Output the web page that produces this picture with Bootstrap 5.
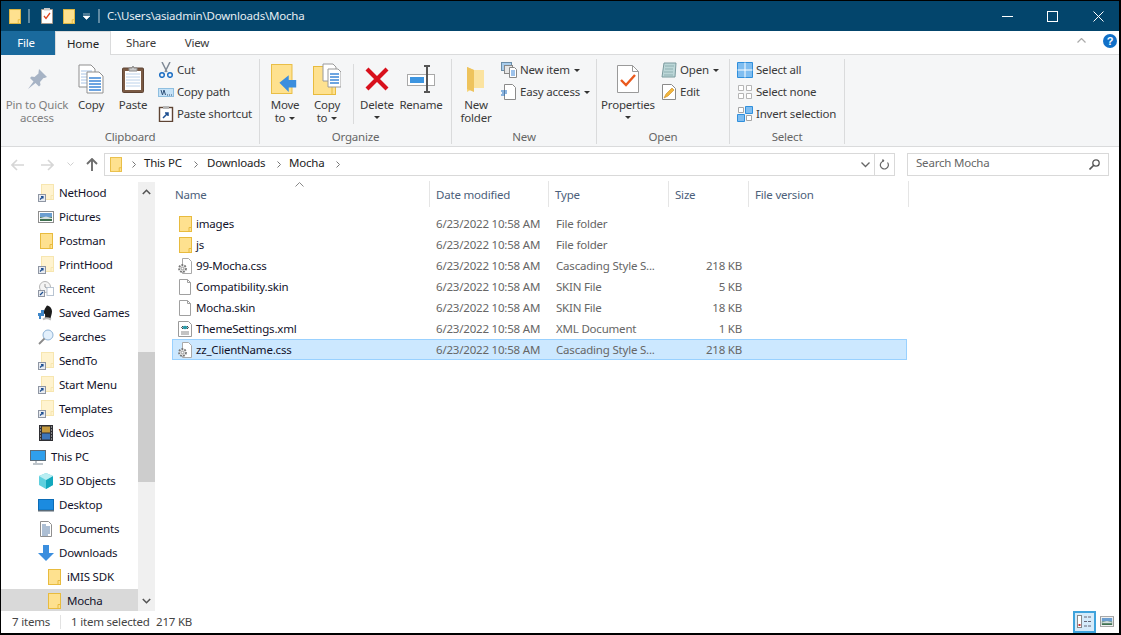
<!DOCTYPE html>
<html lang="en">
<head>
<meta charset="UTF-8">
<title>Mocha</title>
<link href="https://cdn.jsdelivr.net/npm/bootstrap@5.3.2/dist/css/bootstrap.min.css" rel="stylesheet">
<style>
html,body{height:100%;overflow:hidden;background:#000}
body{font-family:"Noto Sans",sans-serif;font-size:11.5px;line-height:16px;letter-spacing:-.2px;color:#1a1a2a}
svg{display:block;flex:none}
.win{width:1118px;height:632px;margin:1px 0 0 1px;background:#fff;overflow:hidden}
.titlebar{height:30px;background:#03456c;color:#e6edf2}
.tsep{width:2px;height:14px;background:#5f8aa3}
.tabbar{height:24px;border-bottom:1px solid #dadbdc;background:#fff;color:#3b3b3b}
.tab{height:24px;line-height:23px;text-align:center}
.tab-file{width:54px;background:#1a6a9d;color:#fff;padding-right:4px}
.tab-home{width:56px;background:#f5f6f7;border:1px solid #dadbdc;border-bottom:0;color:#222}
.ribbon{height:92px;background:#f5f6f7;border-bottom:1px solid #dadbdc;color:#3a3a3a;padding-top:4px}
.rgroup{height:85px;border-right:1px solid #dadbdc;position:relative;flex:none}
.rlabel{position:absolute;left:0;right:0;bottom:-1px;text-align:center;color:#666;line-height:16px}
.rbig{display:flex;flex-direction:column;align-items:center;text-align:center;line-height:13px;flex:none;white-space:nowrap}
.rbig .ic{height:39px;display:flex;align-items:center;justify-content:center}
.rsmall{height:22px;display:flex;align-items:center;white-space:nowrap}
.dim{color:#7f7f7f}
.drop{display:inline-block;border:3px solid transparent;border-top:3px solid #333;border-bottom:0;vertical-align:2px;margin-left:4px}
.vsep{width:1px;height:60px;background:#dadbdc;margin-top:5px}
.addrbar{height:34px;padding:6px 0 5px 0}
.addrbox{height:23px;border:1px solid #d9d9d9;color:#222}
.addrbox span,.searchbox span{margin-bottom:4px}
.searchbox{height:23px;border:1px solid #d9d9d9;color:#666}
.mainpane{height:430px}
.navpane{width:137px;flex:none;overflow:hidden}
.navrow{height:24px;display:flex;align-items:center;white-space:nowrap;color:#12122a}
.navrow.sel{background:#d9d9d9}
.navscroll{width:17px;flex:none;background:#f0f0f0;margin-top:1px}
.sbtn{height:20px;display:flex;align-items:center;justify-content:center}
.sthumb{height:130px;background:#cdcdcd}
.fileshead{height:26px;color:#4c607a}
.hcell{height:26px;padding-left:6px;line-height:28px;border-right:1px solid #e5e5e5;flex:none}
.filerow{height:21px;margin-left:17px;width:735px;display:flex;align-items:center;border:1px solid transparent;color:#666}
.filerow.sel{background:#cce8ff;border-color:#99d1ff}
.fname{width:263px;padding-left:4px;color:#12122a;display:flex;align-items:center;flex:none}
.statusbar{height:21px;color:#444}
.viewbtn{width:23px;height:22px;border:2px solid #3fa3dc;background:#d5ebfa;display:flex;align-items:center;justify-content:center}
</style>
</head>
<body>
<svg width="0" height="0" style="position:absolute">
  <defs>
    <symbol id="folder" viewBox="0 0 13 16"><rect x=".5" y=".5" width="12" height="15" fill="#fee18f" stroke="#e8bb3e"/><path d="M10 15.500v-4h2.500" fill="none" stroke="#e8bb3e"/></symbol>
    <symbol id="ghost" viewBox="0 0 16 18"><rect x="3.500" y=".5" width="12" height="15" fill="#fff3cf" stroke="#f7e6b0"/><path d="M13 15.500v-4h2.500" fill="none" stroke="#f7e6b0"/><rect x=".5" y="10.500" width="7" height="7" fill="#e9ecf1" stroke="#8f96a3"/><path d="M2 15.500l3-3M3 12.500h2v2" stroke="#1d4f91" stroke-width="1.200" fill="none"/></symbol>
    <symbol id="gearfile" viewBox="0 0 16 16"><path d="M5.500.5h6l3 3v12h-9z" fill="#fff" stroke="#a9a9a9"/><circle cx="5.500" cy="10.500" r="3.500" fill="#e2e2e2" stroke="#777" stroke-width="1.800" stroke-dasharray="1.800 1.200"/><circle cx="5.500" cy="10.500" r="1.300" fill="#fff" stroke="#8a8a8a" stroke-width=".8"/></symbol>
    <symbol id="blank" viewBox="0 0 16 16"><path d="M2.500.5h8l3 3v12h-11z" fill="#fff" stroke="#a0a0a0"/><path d="M10.500.5v3h3" fill="none" stroke="#a0a0a0"/></symbol>
    <symbol id="xmlfile" viewBox="0 0 16 16"><path d="M1.500.5h10l3 3v12h-13z" fill="#fff" stroke="#9a9a9a"/><path d="M4 11h8M4 13h8" stroke="#888"/><ellipse cx="8" cy="6.500" rx="2.500" ry="1.800" fill="#2a9aa8"/><path d="M4.500 6.500l1.500-1.500M4.500 6.500l1.500 1.500M11.500 6.500l-1.500-1.500M11.500 6.500l-1.500 1.500" stroke="#444"/></symbol>
    <symbol id="pictures" viewBox="0 0 16 12"><rect x=".5" y=".5" width="15" height="11" fill="#fff" stroke="#8d8d8d"/><rect x="2" y="2" width="12" height="4" fill="#6b9ed0"/><rect x="2" y="6" width="12" height="4" fill="#3f7150"/><path d="M2 7l6-1.500 6 1.500v1H2z" fill="#d6e0e0"/></symbol>
    <symbol id="recent" viewBox="0 0 16 16"><circle cx="7" cy="6" r="5.500" fill="#f4f4f4" stroke="#b5b5b5"/><path d="M7 3v3l2 1" stroke="#999" fill="none"/><rect x="9" y="6.500" width="6.500" height="8" fill="#fff" stroke="#b8c4d2"/><rect x=".5" y="9.500" width="6" height="6" fill="#e9ecf1" stroke="#8f96a3"/><path d="M2 14l3-3" stroke="#1d4f91" stroke-width="1.300"/></symbol>
    <symbol id="games" viewBox="0 0 16 16"><path d="M9 .5c3 .5 5 3 5 6s-1.500 5-1.500 7.500h-6c1-2 .5-3 .5-5-1 0-2-1-1-3 1-3 2-4 3-5.500z" fill="#1c1c1c"/><path d="M5 14.500c2-1.500 5-1.500 8 0" stroke="#bbb" fill="none" stroke-width="2"/><path d="M0 8h3V5h3v6H3v3H1v-3H0z" fill="#3f87c9"/></symbol>
    <symbol id="searches" viewBox="0 0 16 16"><circle cx="10" cy="6" r="5" fill="#e3f0fc" stroke="#8fb3d6"/><path d="M6.500 9.500L1 15" stroke="#8a8a8a" stroke-width="1.800"/></symbol>
    <symbol id="videos" viewBox="0 0 14 16"><rect width="14" height="16" fill="#2f2f33"/><rect x="3" y="1.500" width="8" height="6" fill="#c49a3f"/><rect x="3" y="8.500" width="8" height="6" fill="#3d75b8"/><path d="M1 2h1M1 5h1M1 8h1M1 11h1M1 14h1M12 2h1M12 5h1M12 8h1M12 11h1M12 14h1" stroke="#ddd"/></symbol>
    <symbol id="pc" viewBox="0 0 16 15"><rect x=".5" y=".5" width="15" height="10" fill="#2f9fec" stroke="#5b6b78"/><path d="M6 11v2M3 14h10" stroke="#a9b2ba" stroke-width="1.500"/></symbol>
    <symbol id="obj3d" viewBox="0 0 16 16"><path d="M8 0l7 3v9l-7 4-7-4V3z" fill="#5fd0de"/><path d="M8 7l7-4v9l-7 4z" fill="#13a8bd"/><path d="M8 0l7 3-7 4-7-4z" fill="#b9eef2"/></symbol>
    <symbol id="desktop" viewBox="0 0 16 13"><rect x=".5" y=".5" width="15" height="10.500" fill="#1b8be0" stroke="#0c6cb6"/><rect x="0" y="11" width="16" height="1.500" fill="#5b6b78"/></symbol>
    <symbol id="documents" viewBox="0 0 12 16"><path d="M.5.5h8l3 3v12H.5z" fill="#fff" stroke="#8f8f8f"/><path d="M2 4h4M2 6h8M2 8h8M2 10h8M2 12h8M2 14h6" stroke="#5b7ea8"/></symbol>
    <symbol id="downloads" viewBox="0 0 16 16"><path d="M5 0h6v8h5l-8 8-8-8h5z" fill="#3b8ede"/></symbol>
    <symbol id="pin" viewBox="0 0 22 22"><path d="M13 1l8 8-2.500 1-1 0-3.500 4 .5 3-1.500 1.500-3.500-3.500L2 21l5.500-7.500L4 10l1.500-1.500 3 .5 4-3.500 0-1z" fill="#a6b3c5"/></symbol>
    <symbol id="copyicon" viewBox="0 0 26 30"><path d="M1 1h12l4 4v18H1z" fill="#fff" stroke="#8f8f8f"/><path d="M3 7h11M3 10h11M3 13h11M3 16h11M3 19h11" stroke="#a9c4e6"/><path d="M9 8h12l4 4v17H9z" fill="#fff" stroke="#8f8f8f"/><path d="M11 14h12M11 17h12M11 20h12M11 23h12M11 26h12" stroke="#3d86d8" stroke-width="1.500"/></symbol>
    <symbol id="pasteicon" viewBox="0 0 22 28"><rect x=".5" y="3" width="21" height="24.500" rx="1" fill="#7a5a44" stroke="#5e4434"/><rect x="3" y="6" width="16" height="19" fill="#fff"/><path d="M4 9h14M4 12h14M4 15h14M4 18h14M4 21h14" stroke="#bcd2ea"/><path d="M7 6V3h3l1-2 1 2h3v3z" fill="#c9c9c9" stroke="#8a8a8a"/></symbol>
    <symbol id="cut" viewBox="0 0 16 16"><path d="M4 0l5 10M12 0L7 10" stroke="#7f8a96" stroke-width="1.500"/><circle cx="4" cy="13" r="2.300" fill="none" stroke="#1d6fc4" stroke-width="1.500"/><circle cx="12" cy="13" r="2.300" fill="none" stroke="#1d6fc4" stroke-width="1.500"/></symbol>
    <symbol id="copypath" viewBox="0 0 16 9"><rect x=".5" y=".5" width="15" height="8" fill="#c6e2f7" stroke="#8fbfe0"/><path d="M3 2l1.500 5L6 2l1.500 5M9 7h1M11 7h1M13 7h1" stroke="#2e4f78" fill="none"/></symbol>
    <symbol id="pasteshort" viewBox="0 0 14 16"><rect x=".5" y="1.500" width="13" height="14" fill="#fff" stroke="#5e4434" stroke-width="1.400"/><rect x="4" y="0" width="6" height="3" fill="#b5b5b5"/><path d="M4 12l5-5M6 7h3v3" stroke="#1d4f91" stroke-width="1.500" fill="none"/></symbol>
    <symbol id="moveicon" viewBox="0 0 30 32"><rect x=".5" y=".5" width="22" height="31" fill="#fee18f" stroke="#e8bb3e"/><path d="M12 17L22 9v5h8v8h-8v5z" transform="translate(-3 3)" fill="#3b8ede"/></symbol>
    <symbol id="copytoicon" viewBox="0 0 28 32"><rect x=".5" y="3.500" width="22" height="28" fill="#fee18f" stroke="#e8bb3e"/><path d="M19 31.500v-8h3.500" fill="none" stroke="#e8bb3e"/><path d="M10 1h10l3 3v14H10z" fill="#fff" stroke="#9a9a9a"/><path d="M15 6h10l3 3v15H15z" fill="#fff" stroke="#9a9a9a"/><path d="M17 11h9M17 14h9M17 17h9M17 20h9" stroke="#3d86d8" stroke-width="1.300"/></symbol>
    <symbol id="deleteicon" viewBox="0 0 26 26"><path d="M3 3l20 20M23 3L3 23" stroke="#d8101c" stroke-width="4.200"/></symbol>
    <symbol id="renameicon" viewBox="0 0 28 28"><rect x=".5" y="9.500" width="27" height="11" fill="#fff" stroke="#a9a9a9"/><rect x="3" y="12" width="14" height="6" fill="#3d95e0"/><path d="M17 1h6M17 27h6M20 1v26" stroke="#555" stroke-width="2"/></symbol>
    <symbol id="newfolder" viewBox="0 0 20 28"><path d="M1 2l7 3h10v18H8l-7 4z" fill="#f6d57b"/><path d="M1 2l7 3v22l-7-3z" fill="#eec35c"/><path d="M8 5h10v18H8z" fill="#fbe3a0"/></symbol>
    <symbol id="newitem" viewBox="0 0 16 16"><rect x=".5" y=".5" width="10" height="8" fill="#a9cdec" stroke="#6b8da8"/><rect x="3.500" y="3.500" width="8" height="8" fill="#e6e6e6" stroke="#888"/><path d="M8.500 5.500h5l2 2v8h-7z" fill="#fff" stroke="#888"/><path d="M10 9h4M10 11h4M10 13h4" stroke="#3d86d8"/></symbol>
    <symbol id="easy" viewBox="0 0 16 16"><path d="M3.500.5h8l3 3v12h-11z" fill="#fff" stroke="#8a8a8a"/><path d="M0 7h6M1 9h5M0 11h4" stroke="#1d6fc4"/></symbol>
    <symbol id="props" viewBox="0 0 22 28"><path d="M.5.5h15l6 6v21H.5z" fill="#fff" stroke="#9a9a9a"/><path d="M15.500.5v6h6" fill="none" stroke="#9a9a9a"/><path d="M4 15l5 5 9-10" fill="none" stroke="#ea5a1e" stroke-width="2.400"/></symbol>
    <symbol id="openic" viewBox="0 0 16 16"><path d="M3 1h12l-1 14H1z" fill="#bcd7d8" stroke="#7b9a9e"/><path d="M4 4h9M4 7h8M3 10h9M3 13h9" stroke="#8fb0b2"/></symbol>
    <symbol id="editic" viewBox="0 0 14 16"><path d="M.5.5h9l4 4v11H.5z" fill="#fff" stroke="#8a8a8a"/><path d="M2 14l2-4 6-6 2 2-6 6z" fill="#f2b63c" stroke="#c98a20" stroke-width=".6"/></symbol>
    <symbol id="selall" viewBox="0 0 16 16"><path d="M.5.500h15v15H.5z" fill="#7fbdf0" stroke="#2f8fdc"/><path d="M8 .5v15M.5 8h15" stroke="#fff"/></symbol>
    <symbol id="selnone" viewBox="0 0 16 16"><path d="M1.500 1.500h5v5h-5zM9.500 1.500h5v5h-5zM1.500 9.500h5v5h-5zM9.500 9.500h5v5h-5z" fill="#fff" stroke="#b5b5b5"/></symbol>
    <symbol id="selinv" viewBox="0 0 16 16"><path d="M1.500 1.500h5v5h-5zM9.500 9.500h5v5h-5z" fill="#fff" stroke="#a5a5a5"/><path d="M8.500.5h7v7h-7zM.5 8.500h7v7h-7z" fill="#7fbdf0" stroke="#2f8fdc"/></symbol>
    <symbol id="checkdoc" viewBox="0 0 12 16"><path d="M.5 1.500h11v14H.5z" fill="#fff" stroke="#a89a8c"/><rect x="3" y="0" width="6" height="2.500" fill="#c9c9c9"/><path d="M3 8l2 2.500L9 5" fill="none" stroke="#e0451c" stroke-width="1.300"/></symbol>
  </defs>
</svg>

<div class="win d-flex flex-column">
  <!-- barra de titulo -->
  <div class="titlebar d-flex align-items-center">
    <svg class="ms-2" width="12" height="15"><use href="#folder"/></svg>
    <div class="tsep" style="margin-left:7px"></div>
    <svg width="12" height="16" style="margin-left:11px"><use href="#checkdoc"/></svg>
    <svg width="12" height="15" style="margin-left:10px"><use href="#folder"/></svg>
    <svg width="7" height="7" style="margin-left:8px"><path d="M0 1h7M0 3h7l-3.500 3.500z" fill="#fff" stroke="#fff" stroke-width=".6"/></svg>
    <div class="tsep" style="margin-left:8px"></div>
    <span style="margin-left:7px">C:\Users\asiadmin\Downloads\Mocha</span>
    <div class="ms-auto d-flex align-items-center">
      <svg width="11" height="11" style="margin-right:34px"><path d="M0 5.500h11" stroke="#fff"/></svg>
      <svg width="11" height="11" style="margin-right:35px"><rect x=".5" y=".5" width="10" height="10" fill="none" stroke="#fff"/></svg>
      <svg width="11" height="11" style="margin-right:15px"><path d="M.5.5l10 10M10.500.5l-10 10" stroke="#fff"/></svg>
    </div>
  </div>

  <!-- pestañas -->
  <div class="tabbar d-flex">
    <div class="tab tab-file">File</div>
    <div class="tab tab-home">Home</div>
    <div class="tab" style="width:60px">Share</div>
    <div class="tab" style="width:52px">View</div>
    <div class="ms-auto d-flex align-items-center pb-1">
      <svg width="9" height="5" style="margin-right:17px"><path d="M.5 4.500l4-4 4 4" fill="none" stroke="#aaa" stroke-width="1.200"/></svg>
      <svg width="14" height="14" style="margin-right:2px"><circle cx="7" cy="7" r="7" fill="#1170c8"/><text x="7" y="11" text-anchor="middle" font-size="11" font-weight="700" fill="#fff" font-family="Liberation Sans">?</text></svg>
    </div>
  </div>

  <!-- ribbon -->
  <div class="ribbon d-flex">
    <div class="rgroup d-flex" style="width:259px;padding-left:4px">
      <div class="rbig dim" style="width:64px"><div class="ic"><svg width="22" height="22"><use href="#pin"/></svg></div>Pin to Quick<br>access</div>
      <div class="rbig" style="width:44px"><div class="ic"><svg width="26" height="30"><use href="#copyicon"/></svg></div>Copy</div>
      <div class="rbig" style="width:40px"><div class="ic"><svg width="22" height="28"><use href="#pasteicon"/></svg></div>Paste</div>
      <div style="margin-left:5px">
        <div class="rsmall"><svg width="16" height="16" class="me-1"><use href="#cut"/></svg><span style="margin-left:-1px">Cut</span></div>
        <div class="rsmall"><svg width="16" height="9" class="me-1"><use href="#copypath"/></svg><span style="margin-left:-1px">Copy path</span></div>
        <div class="rsmall"><svg width="16" height="16" class="me-1"><use href="#pasteshort"/></svg><span style="margin-left:-1px">Paste shortcut</span></div>
      </div>
      <div class="rlabel">Clipboard</div>
    </div>
    <div class="rgroup d-flex" style="width:192px;padding-left:3px">
      <div class="rbig" style="width:42px;margin-left:1px"><div class="ic"><svg width="28" height="30"><use href="#moveicon"/></svg></div>Move<br><span>to<i class="drop"></i></span></div>
      <div class="rbig" style="width:42px"><div class="ic"><svg width="28" height="32"><use href="#copytoicon"/></svg></div>Copy<br><span>to<i class="drop"></i></span></div>
      <div class="vsep" style="margin-left:5px"></div>
      <div class="rbig" style="width:46px"><div class="ic"><svg width="26" height="26"><use href="#deleteicon"/></svg></div>Delete<br><i class="drop" style="margin:5px 0 0"></i></div>
      <div class="rbig" style="width:42px"><div class="ic"><svg width="28" height="28"><use href="#renameicon"/></svg></div>Rename</div>
      <div class="rlabel">Organize</div>
    </div>
    <div class="rgroup d-flex" style="width:145px;padding-left:3px">
      <div class="rbig" style="width:42px"><div class="ic"><svg width="20" height="28"><use href="#newfolder"/></svg></div>New<br>folder</div>
      <div style="margin-left:4px">
        <div class="rsmall"><svg width="16" height="16" style="margin-right:3px"><use href="#newitem"/></svg>New item<i class="drop"></i></div>
        <div class="rsmall"><svg width="16" height="16" style="margin-right:3px"><use href="#easy"/></svg>Easy access<i class="drop"></i></div>
      </div>
      <div class="rlabel">New</div>
    </div>
    <div class="rgroup d-flex" style="width:133px;padding-left:2px">
      <div class="rbig" style="width:58px"><div class="ic"><svg width="22" height="28"><use href="#props"/></svg></div>Properties<br><i class="drop" style="margin:5px 0 0"></i></div>
      <div style="margin-left:4px">
        <div class="rsmall"><svg width="16" height="16" style="margin-right:3px"><use href="#openic"/></svg>Open<i class="drop"></i></div>
        <div class="rsmall"><svg width="14" height="16" style="margin:0 4px 0 1px"><use href="#editic"/></svg>Edit</div>
      </div>
      <div class="rlabel">Open</div>
    </div>
    <div class="rgroup" style="width:115px;padding-left:7px">
      <div class="rsmall"><svg width="16" height="16" style="margin-right:3px"><use href="#selall"/></svg>Select all</div>
      <div class="rsmall"><svg width="16" height="16" style="margin-right:3px"><use href="#selnone"/></svg>Select none</div>
      <div class="rsmall"><svg width="16" height="16" style="margin-right:3px"><use href="#selinv"/></svg>Invert selection</div>
      <div class="rlabel">Select</div>
    </div>
  </div>

  <!-- barra de direccion -->
  <div class="addrbar d-flex">
    <div class="d-flex align-items-center" style="width:103px">
      <svg width="13" height="12" style="margin-left:10px"><path d="M6 1L1 6l5 5M1 6h12" fill="none" stroke="#d6d6d6" stroke-width="1.600"/></svg>
      <svg width="13" height="12" style="margin-left:17px"><path d="M7 1l5 5-5 5M12 6H0" fill="none" stroke="#d6d6d6" stroke-width="1.600"/></svg>
      <svg width="7" height="5" style="margin-left:13px"><path d="M.5.5l3 3 3-3" fill="none" stroke="#d0d0d0"/></svg>
      <svg width="12" height="13" style="margin-left:12px"><path d="M1 6l5-5 5 5M6 1v12" fill="none" stroke="#6d6d6d" stroke-width="1.900"/></svg>
    </div>
    <div class="addrbox d-flex align-items-center" style="width:791px">
      <svg width="12" height="15" style="margin-left:5px"><use href="#folder"/></svg>
      <svg width="4" height="7" style="margin-left:10px"><path d="M.5.5l3 3-3 3" fill="none" stroke="#777"/></svg>
      <span style="margin-left:8px;width:50px">This PC</span>
      <svg width="4" height="7"><path d="M.5.5l3 3-3 3" fill="none" stroke="#777"/></svg>
      <span style="margin-left:9px;width:70px">Downloads</span>
      <svg width="4" height="7"><path d="M.5.5l3 3-3 3" fill="none" stroke="#777"/></svg>
      <span style="margin-left:8px;width:47px">Mocha</span>
      <svg width="4" height="7"><path d="M.5.5l3 3-3 3" fill="none" stroke="#777"/></svg>
      <div class="ms-auto d-flex align-items-center h-100">
        <svg width="9" height="6" style="margin-right:4px"><path d="M.5.5l4 4 4-4" fill="none" stroke="#666" stroke-width="1.300"/></svg>
        <div style="width:1px;height:21px;background:#d9d9d9"></div>
        <svg width="10" height="11" style="margin:0 5px 0 4px"><path d="M8.500 3.500A4 4 0 1 1 5 2H3m2 0L3.500.5" fill="none" stroke="#666" stroke-width="1.200"/></svg>
      </div>
    </div>
    <div class="searchbox d-flex align-items-center" style="width:202px;margin-left:12px;padding-left:8px">
      <span>Search Mocha</span>
      <svg class="ms-auto" width="11" height="11" style="margin-right:8px"><circle cx="7" cy="4" r="3.200" fill="none" stroke="#555" stroke-width="1.300"/><path d="M4.500 6.500L.5 10.500" stroke="#555" stroke-width="1.600"/></svg>
    </div>
  </div>

  <!-- panel principal -->
  <div class="mainpane d-flex">
    <div class="navpane" id="navlist"></div>
    <div class="navscroll d-flex flex-column">
      <div class="sbtn"><svg width="9" height="6"><path d="M.8 5L4.500 1.300 8.200 5" fill="none" stroke="#555" stroke-width="1.600"/></svg></div>
      <div style="height:150px"></div>
      <div class="sthumb"></div>
      <div class="flex-grow-1"></div>
      <div class="sbtn"><svg width="9" height="6"><path d="M.8 1L4.500 4.700 8.200 1" fill="none" stroke="#555" stroke-width="1.600"/></svg></div>
    </div>
    <div class="flex-grow-1" style="position:relative">
      <svg width="9" height="5" style="position:absolute;left:140px;top:1px"><path d="M.5 4.500l4-4 4 4" fill="none" stroke="#888"/></svg>
      <div class="fileshead d-flex" style="padding-left:15px">
        <div class="hcell" style="width:260px;padding-left:5px">Name</div>
        <div class="hcell" style="width:119px">Date modified</div>
        <div class="hcell" style="width:120px">Type</div>
        <div class="hcell" style="width:80px">Size</div>
        <div class="hcell" style="width:160px">File version</div>
      </div>
      <div id="filelist" style="margin-top:6px"></div>
    </div>
  </div>

  <!-- barra de estado -->
  <div class="statusbar d-flex align-items-center">
    <span style="margin-left:11px;width:48px">7 items</span>
    <div style="width:1px;height:14px;background:#e2e2e2"></div>
    <span style="margin-left:10px;width:85px">1 item selected</span>
    <span>217 KB</span>
    <div class="ms-auto d-flex align-items-center" style="margin-right:5px">
      <div class="viewbtn"><svg width="15" height="13"><rect x=".5" y=".5" width="4" height="12" fill="#fff" stroke="#888"/><rect x="1.500" y="9" width="2" height="2" fill="#c33"/><path d="M7 2h3M11 2h3M7 6.500h3M11 6.500h3M7 11h3M11 11h3" stroke="#667"/></svg></div>
      <svg width="14" height="11" style="margin-left:4px"><use href="#pictures"/></svg>
    </div>
  </div>
</div>

<script src="https://cdn.jsdelivr.net/npm/bootstrap@5.3.2/dist/js/bootstrap.bundle.min.js"></script>
<script>
    // panel de navegacion: [texto, icono, ancho, alto, x del icono, x del texto]
    const navItems = [
        ['NetHood', 'ghost', 16, 18, 37, 58],
        ['Pictures', 'pictures', 16, 12, 37, 58],
        ['Postman', 'folder', 13, 16, 39, 58],
        ['PrintHood', 'ghost', 16, 18, 37, 58],
        ['Recent', 'recent', 16, 16, 37, 58],
        ['Saved Games', 'games', 16, 16, 37, 58],
        ['Searches', 'searches', 16, 16, 37, 58],
        ['SendTo', 'ghost', 16, 18, 37, 58],
        ['Start Menu', 'ghost', 16, 18, 37, 58],
        ['Templates', 'ghost', 16, 18, 37, 58],
        ['Videos', 'videos', 14, 16, 38, 58],
        ['This PC', 'pc', 16, 15, 29, 50],
        ['3D Objects', 'obj3d', 16, 16, 37, 58],
        ['Desktop', 'desktop', 16, 13, 37, 58],
        ['Documents', 'documents', 12, 16, 39, 58],
        ['Downloads', 'downloads', 16, 16, 37, 58],
        ['iMIS SDK', 'folder', 13, 16, 47, 66],
        ['Mocha', 'folder', 13, 16, 47, 66, true]
    ];
    document.getElementById('navlist').innerHTML = navItems.map(n => `
        <div class="navrow${n[6] ? ' sel' : ''}">
            <svg width="${n[2]}" height="${n[3]}" style="margin-left:${n[4]}px"><use href="#${n[1]}"/></svg>
            <span style="margin-left:${n[5] - n[4] - n[2]}px">${n[0]}</span>
        </div>`).join('');

    const files = [
        ['images', 'folder', '', 'File folder', ''],
        ['js', 'folder', '', 'File folder', ''],
        ['99-Mocha.css', 'gearfile', '', 'Cascading Style S...', '218 KB'],
        ['Compatibility.skin', 'blank', '', 'SKIN File', '5 KB'],
        ['Mocha.skin', 'blank', '', 'SKIN File', '18 KB'],
        ['ThemeSettings.xml', 'xmlfile', '', 'XML Document', '1 KB'],
        ['zz_ClientName.css', 'gearfile', '', 'Cascading Style S...', '218 KB', true]
    ];
    document.getElementById('filelist').innerHTML = files.map(f => `
        <div class="filerow${f[5] ? ' sel' : ''}">
            <div class="fname">
                <svg width="${f[1] === 'folder' ? 13 : 16}" height="16"${f[1] === 'folder' ? ' style="margin-left:2px;margin-right:1px"' : ''}><use href="#${f[1]}"/></svg>
                <span style="margin-left:3px">${f[0]}</span>
            </div>
            <span style="width:120px">6/23/2022 10:58 AM</span>
            <span style="width:120px">${f[3]}</span>
            <span style="width:66px;text-align:right">${f[4]}</span>
        </div>`).join('');
</script>
</body>
</html>
